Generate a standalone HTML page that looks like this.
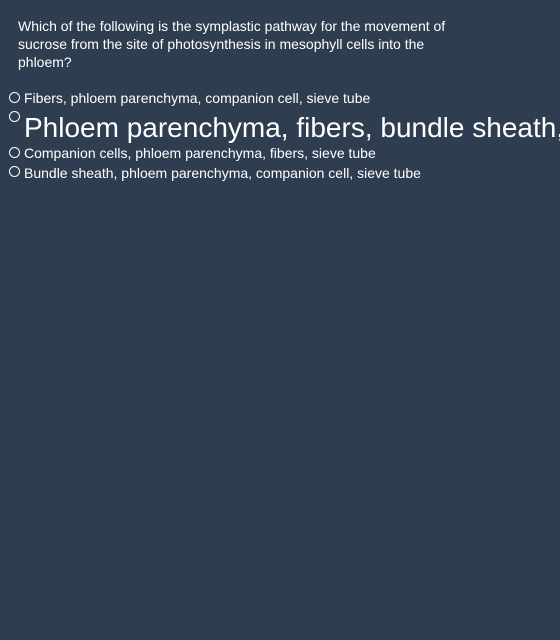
<!DOCTYPE html>
<html><head><meta charset="utf-8"><style>
html,body{margin:0;padding:0;width:560px;height:640px;overflow:hidden;background:#2e3d4f;color:#fff;font-family:"Liberation Sans",Arial,sans-serif}
.wrap{position:absolute;left:0;top:0;width:560px;height:640px;overflow:hidden}
.q{position:absolute;left:18px;top:17px;width:432px;font-size:14px;line-height:18px}
.o{position:absolute;left:24px;white-space:nowrap;font-size:14px;line-height:18px}
.r{position:absolute;left:9px;width:9px;height:9px;border:1.3px solid #fff;border-radius:50%}
</style></head><body><div class="wrap">
<div class="q">Which of the following is the symplastic pathway for the movement of sucrose from the site of photosynthesis in mesophyll cells into the phloem?</div>
<div class="r" style="top:92px"></div><div class="o" style="top:89px">Fibers, phloem parenchyma, companion cell, sieve tube</div>
<div class="r" style="top:111px"></div><div class="o" style="top:111px;font-size:28px;line-height:34px">Phloem parenchyma, fibers, bundle sheath, sieve tube</div>
<div class="r" style="top:147px"></div><div class="o" style="top:144px">Companion cells, phloem parenchyma, fibers, sieve tube</div>
<div class="r" style="top:166px"></div><div class="o" style="top:164px">Bundle sheath, phloem parenchyma, companion cell, sieve tube</div>
</div></body></html>
